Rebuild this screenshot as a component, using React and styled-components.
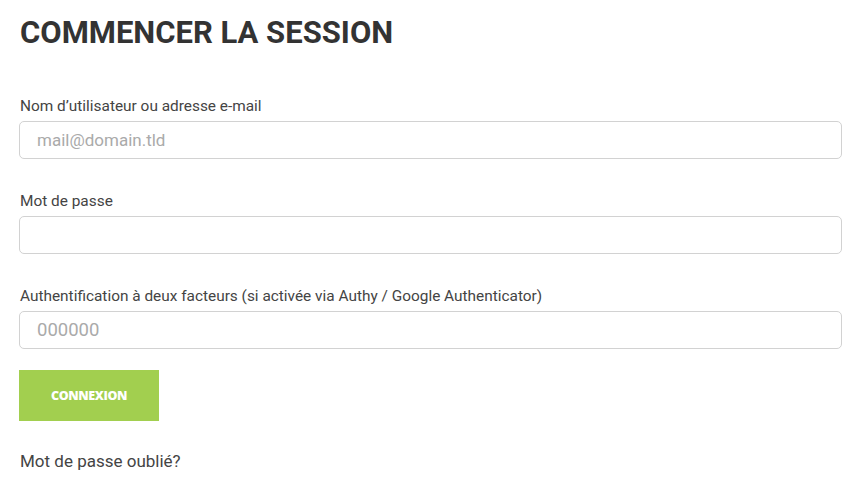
import React from "react"
import styled, { createGlobalStyle } from "styled-components"

const GlobalStyle = createGlobalStyle`
  html, body {
    margin: 0;
    padding: 0;
    background: #fff;
  }
  body {
    font-family: Roboto, "Liberation Sans", Arial, sans-serif;
    color: #333;
  }
  * {
    box-sizing: border-box;
  }
`

const Page = styled.form`
  padding: 13px 19px 20px 19px;
  display: flex;
  flex-direction: column;
`

const Title = styled.h1`
  margin: 0 0 0 1px;
  font-size: 31px;
  line-height: 40px;
  font-weight: 700;
  color: #333;
`

const Field = styled.div`
  display: flex;
  flex-direction: column;
  margin-top: ${(p) => p.$top}px;
`

const Label = styled.label`
  font-size: 15.4px;
  line-height: 20px;
  color: #444;
  margin: 0 0 5px 1px;
  white-space: nowrap;
`

const Input = styled.input`
  width: 100%;
  height: 38px;
  border: 1px solid #d2d2d2;
  border-radius: 5px;
  padding: 0 17px;
  font-family: Roboto, "Liberation Sans", Arial, sans-serif;
  font-size: ${(p) => p.$size || 17}px;
  color: #333;
  outline: none;
  &::placeholder {
    color: #aaa;
  }
`

const Button = styled.button`
  margin-top: 21px;
  width: 140px;
  height: 51px;
  border: none;
  background: #a2cf4f;
  color: #fff;
  font-family: "Open Sans", Lato, sans-serif;
  font-weight: 800;
  font-size: 12.5px;
  letter-spacing: -0.4px;
  cursor: pointer;
`

const Forgot = styled.a`
  margin-top: 30px;
  margin-left: 1px;
  font-size: 17px;
  line-height: 20px;
  color: #444;
  text-decoration: none;
`

export default function App() {
  return (
    <>
      <GlobalStyle />
      <Page onSubmit={(e) => e.preventDefault()}>
        <Title>COMMENCER LA SESSION</Title>
        <Field $top={43}>
          <Label>Nom d’utilisateur ou adresse e-mail</Label>
          <Input type="text" placeholder="mail@domain.tld" />
        </Field>
        <Field $top={32}>
          <Label>Mot de passe</Label>
          <Input type="password" />
        </Field>
        <Field $top={32}>
          <Label>Authentification à deux facteurs (si activée via Authy / Google Authenticator)</Label>
          <Input type="text" placeholder="000000" $size={18.5} />
        </Field>
        <Button type="submit">CONNEXION</Button>
        <Forgot href="#">Mot de passe oublié?</Forgot>
      </Page>
    </>
  )
}
